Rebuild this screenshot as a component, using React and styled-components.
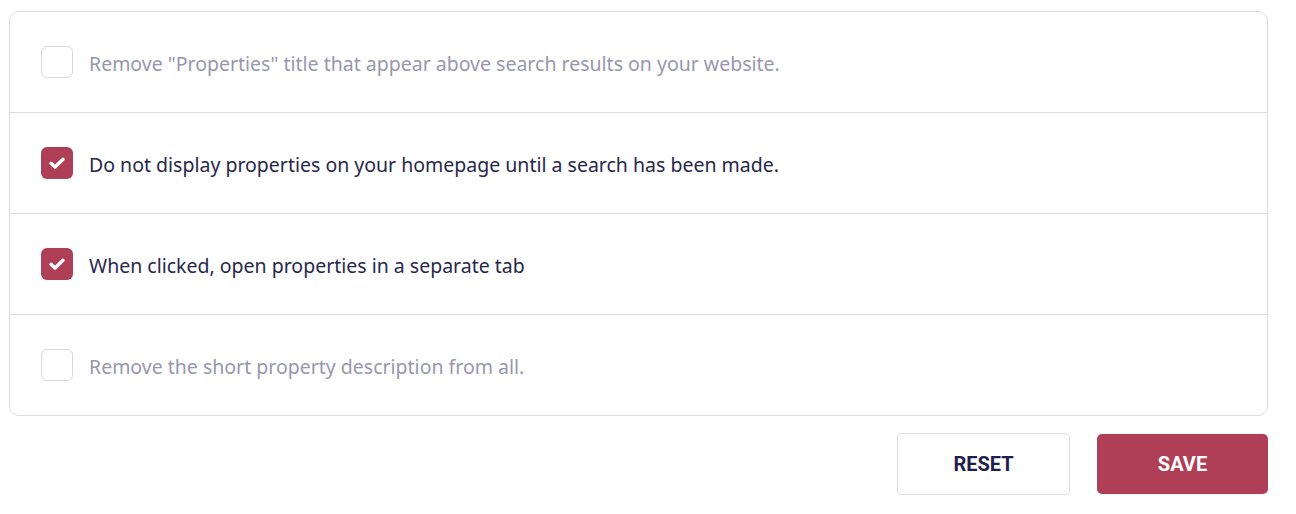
import React, { useState } from 'react'
import styled, { createGlobalStyle } from 'styled-components'

const GlobalStyle = createGlobalStyle`
    body {
        margin: 0;
        background: #fff;
        font-family: "Noto Sans", "Lato", sans-serif;
    }
`

const Page = styled.div`
    width: 1259px;
    padding: 11px 0 0 9px;
`

const Card = styled.div`
    border: 1px solid #dcdbe4;
    border-radius: 10px;
    overflow: hidden;
`

const Row = styled.label`
    display: flex;
    align-items: center;
    gap: 16px;
    height: 100px;
    padding: 0 31px;
    cursor: pointer;

    & + & {
        border-top: 1px solid #dcdbe4;
    }
`

const Box = styled.span`
    width: 32px;
    height: 32px;
    box-sizing: border-box;
    border-radius: 6px;
    flex-shrink: 0;
    display: flex;
    align-items: center;
    justify-content: center;
    border: ${p => p.checked ? 'none' : '1px solid #d8d7e2'};
    background: ${p => p.checked ? '#af3f57' : '#fff'};
`

const Text = styled.span`
    font-size: 19.5px;
    padding-top: 3px;
    color: ${p => p.checked ? '#27274b' : '#9897ad'};
`

const Actions = styled.div`
    display: flex;
    justify-content: flex-end;
    align-items: center;
    gap: 27px;
    margin-top: 17px;
`

const Button = styled.button`
    width: ${p => p.primary ? '171px' : '173px'};
    height: ${p => p.primary ? '60px' : '62px'};
    border-radius: 5px;
    font-family: Roboto, sans-serif;
    font-weight: 700;
    font-size: 20px;
    cursor: pointer;
    border: ${p => p.primary ? 'none' : '1px solid #dcdbe4'};
    background: ${p => p.primary ? '#af3f57' : '#fff'};
    color: ${p => p.primary ? '#fff' : '#1f1f4d'};
`

const options = [
    'Remove "Properties" title that appear above search results on your website.',
    'Do not display properties on your homepage until a search has been made.',
    'When clicked, open properties in a separate tab',
    'Remove the short property description from all.',
]

const App = () => {

    const [ checked, setChecked ] = useState([false, true, true, false])

    const toggle = (i) => {
        setChecked(checked.map((c, j) => j === i ? !c : c))
    }

    return (
        <Page>
            <GlobalStyle />
            <Card>
                {options.map((text, i) => (
                    <Row key={i} onClick={() => toggle(i)}>
                        <Box checked={checked[i]}>
                            {checked[i] && (
                                <svg width="18" height="14" viewBox="0 0 18 14">
                                    <path d="M3 7.3 L7 11 L15 3.2" fill="none" stroke="#fff" strokeWidth="3.4" strokeLinecap="round" strokeLinejoin="round" />
                                </svg>
                            )}
                        </Box>
                        <Text checked={checked[i]}>{text}</Text>
                    </Row>
                ))}
            </Card>
            <Actions>
                <Button>RESET</Button>
                <Button primary>SAVE</Button>
            </Actions>
        </Page>
    )
}

export default App
